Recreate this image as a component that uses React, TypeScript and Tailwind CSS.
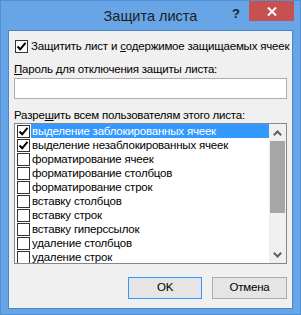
import React from 'react';

// Пункты списка разрешений
const items = [
    { label: 'выделение заблокированных ячеек', checked: true },
    { label: 'выделение незаблокированных ячеек', checked: true },
    { label: 'форматирование ячеек', checked: false },
    { label: 'форматирование столбцов', checked: false },
    { label: 'форматирование строк', checked: false },
    { label: 'вставку столбцов', checked: false },
    { label: 'вставку строк', checked: false },
    { label: 'вставку гиперссылок', checked: false },
    { label: 'удаление столбцов', checked: false },
    { label: 'удаление строк', checked: false },
];

function CheckBox({ checked }: { checked: boolean }) {
    return (
        <div className="w-[13px] h-[13px] shrink-0 border border-[#333333] bg-white flex items-center justify-center">
            {checked && (
                <svg width="11" height="11" viewBox="0 0 11 11">
                    <path d="M1.5 5.5 L4.2 8.3 L9.5 1.8" fill="none" stroke="#000" strokeWidth="2" />
                </svg>
            )}
        </div>
    );
}

export default function App() {
    return (
        <div
            className="w-[301px] h-[315px] bg-[#68a5e6] border border-[#4f8fd6] flex flex-col text-[11.5px] tracking-[-0.2px] text-black overflow-hidden"
            style={{ fontFamily: '"Liberation Sans", Arial, sans-serif' }}
        >
            {/* Заголовок окна */}
            <div className="h-[29px] shrink-0 relative flex items-center justify-center">
                <span className="text-[14.5px] tracking-normal text-[#1e1e1e] mt-[2px]">Защита листа</span>
                <span className="absolute left-[231px] top-[3px] text-[13px] font-bold text-[#222]">?</span>
                <div className="absolute left-[248px] top-0 w-[45px] h-[20px] bg-[#c75050] flex items-center justify-center">
                    <svg width="10" height="9" viewBox="0 0 10 9">
                        <path d="M1 0.5 L9 8.5 M9 0.5 L1 8.5" stroke="#fff" strokeWidth="2" />
                    </svg>
                </div>
            </div>

            {/* Клиентская область */}
            <div className="mx-[7px] h-[279px] bg-[#f0f0f0] border border-[#4a86c8] flex flex-col">
                <div className="mt-[8px] ml-[6px] h-[14px] flex items-center gap-[3px]">
                    <CheckBox checked={true} />
                    <span className="leading-[14px] whitespace-nowrap">
                        Защитить лист и <u>с</u>одержимое защищаемых ячеек
                    </span>
                </div>

                <div className="mt-[9px] ml-[5px] h-[14px] leading-[14px] whitespace-nowrap">
                    <u>П</u>ароль для отключения защиты листа:
                </div>
                <div className="mt-[2px] ml-[5px] w-[273px] h-[21px] bg-white border border-[#abadb3]" />

                <div className="mt-[9px] ml-[5px] h-[14px] leading-[14px] whitespace-nowrap">
                    Разре<u>ш</u>ить всем пользователям этого листа:
                </div>
                <div className="mt-[1px] ml-[5px] w-[273px] h-[141px] bg-white border border-[#828790] flex overflow-hidden">
                    <div className="flex-1 flex flex-col">
                        {items.map((it, i) => (
                            <div key={i} className="h-[14px] shrink-0 flex items-center pl-[2px]">
                                <CheckBox checked={it.checked} />
                                <span
                                    className={
                                        'ml-[1px] h-[14px] pl-[1px] leading-[14px] whitespace-nowrap flex-1 ' +
                                        (i === 0 ? 'bg-[#3399ff] text-white' : '')
                                    }
                                >
                                    {it.label}
                                </span>
                            </div>
                        ))}
                    </div>
                    {/* Полоса прокрутки */}
                    <div className="w-[17px] shrink-0 bg-[#f0f0f0] flex flex-col items-center">
                        <div className="h-[17px] w-full flex items-center justify-center">
                            <svg width="9" height="6" viewBox="0 0 9 6">
                                <path d="M0.8 5.2 L4.5 1.5 L8.2 5.2" fill="none" stroke="#606060" strokeWidth="2" />
                            </svg>
                        </div>
                        <div className="w-[15px] h-[72px] bg-[#a6a6a6]" />
                        <div className="flex-1" />
                        <div className="h-[17px] w-full flex items-center justify-center">
                            <svg width="9" height="6" viewBox="0 0 9 6">
                                <path d="M0.8 0.8 L4.5 4.5 L8.2 0.8" fill="none" stroke="#606060" strokeWidth="2" />
                            </svg>
                        </div>
                    </div>
                </div>

                <div className="mt-[13px] ml-[119px] flex gap-[10px]">
                    <div className="w-[74px] h-[22px] bg-[#e5e5e5] border border-[#3399ff] flex items-center justify-center">
                        OK
                    </div>
                    <div className="w-[75px] h-[22px] bg-[#e5e5e5] border border-[#acacac] flex items-center justify-center">
                        Отмена
                    </div>
                </div>
            </div>
        </div>
    );
}
